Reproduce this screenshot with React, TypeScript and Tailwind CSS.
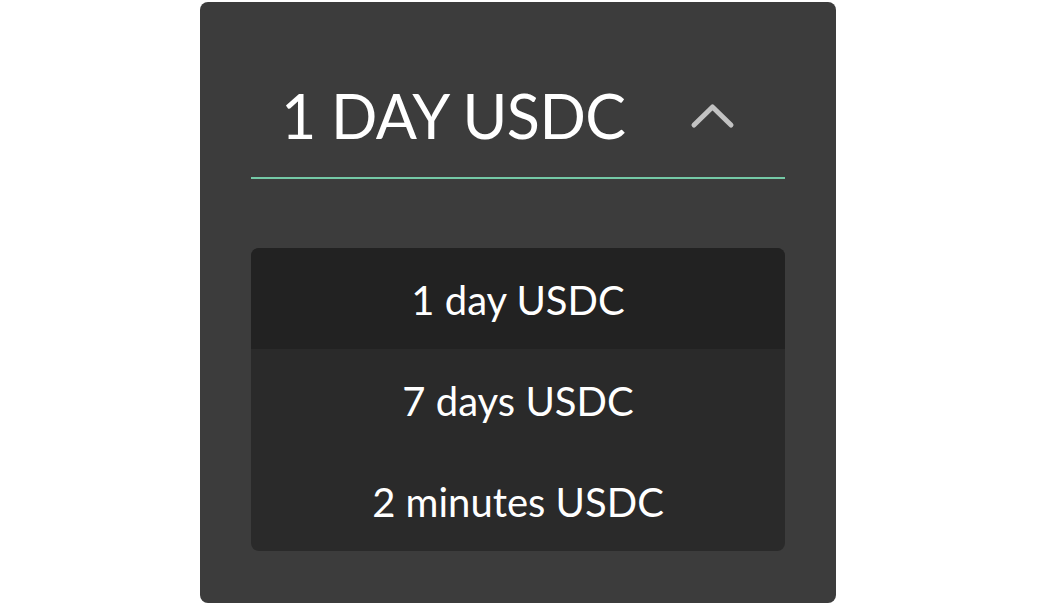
import { useState } from "react";

const options = ["1 day USDC", "7 days USDC", "2 minutes USDC"];

const ChevronUp = () => (
  <svg width="46" height="28" viewBox="0 0 46 28" fill="none">
    <path d="M5 24 L23.5 6 L42 24" stroke="#c2c2c2" strokeWidth="5" strokeLinecap="round" strokeLinejoin="round" />
  </svg>
);

const App = () => {
  const [selected, setSelected] = useState(0);

  return (
    <div className="min-h-screen bg-white font-['Lato',sans-serif]">
      <div className="ml-[200px] mt-[2px] w-[636px] h-[601px] rounded-lg bg-[#3c3c3c] px-[51px] pt-[77px]">
        <button className="flex w-full items-center justify-between border-b-2 border-[#74c9a6] pl-[30px] pr-[50px] pb-[24px]">
          <span className="text-[61px] leading-[74px] text-white tracking-[-0.5px]">
            {options[selected].toUpperCase()}
          </span>
          <span className="mt-[-3px]">
            <ChevronUp />
          </span>
        </button>

        <ul className="mt-[69px] overflow-hidden rounded-lg bg-[#2a2a2a]">
          {options.map((opt, i) => (
            <li
              key={opt}
              onClick={() => setSelected(i)}
              className={
                "flex h-[101px] cursor-pointer items-center justify-center pt-[2px] text-[40px] text-white " +
                (i === selected ? "bg-[#222222]" : "")
              }
            >
              {opt}
            </li>
          ))}
        </ul>
      </div>
    </div>
  );
};

export default App;
